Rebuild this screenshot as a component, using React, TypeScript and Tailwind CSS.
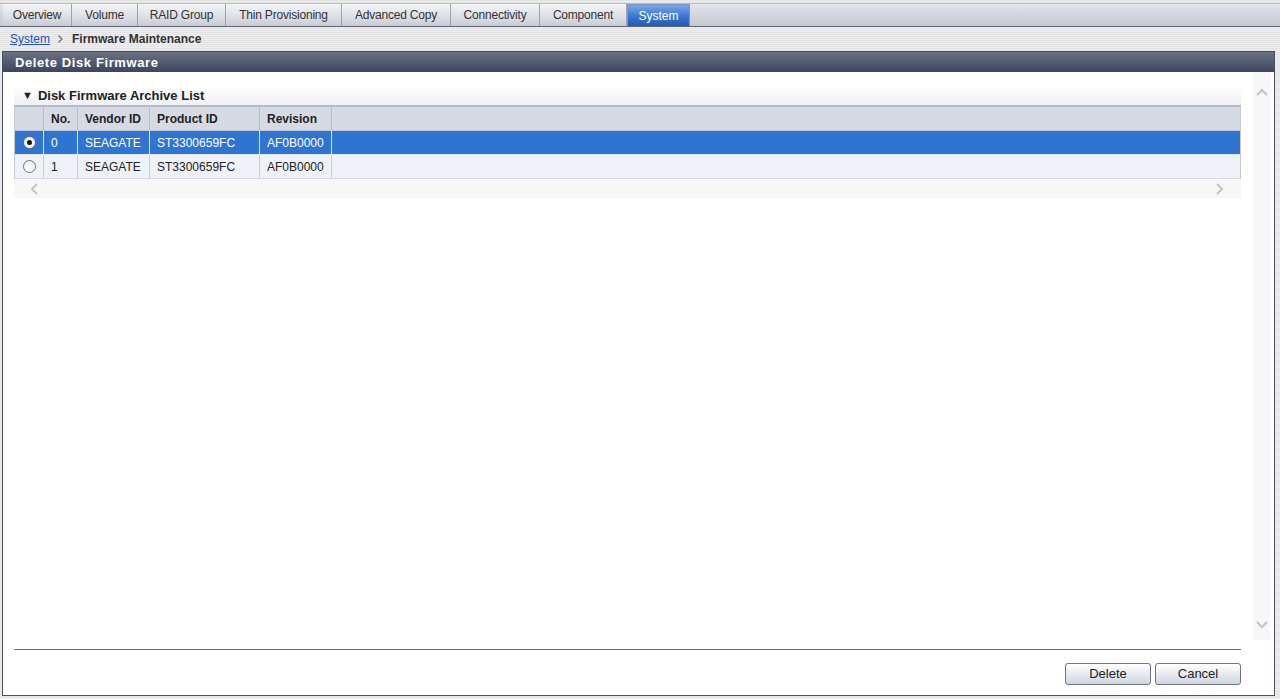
const tabs = [
  { label: "Overview", w: "w-[69px]" },
  { label: "Volume", w: "w-[66px]" },
  { label: "RAID Group", w: "w-[88px]" },
  { label: "Thin Provisioning", w: "w-[116px]" },
  { label: "Advanced Copy", w: "w-[109px]" },
  { label: "Connectivity", w: "w-[89px]" },
  { label: "Component", w: "w-[87px]" },
];

const rows = [
  { no: "0", vendor: "SEAGATE", product: "ST3300659FC", rev: "AF0B0000", selected: true },
  { no: "1", vendor: "SEAGATE", product: "ST3300659FC", rev: "AF0B0000", selected: false },
];

function Chevron({ dir }: { dir: "up" | "down" | "left" | "right" }) {
  const pts = {
    up: "2,9 7,4 12,9",
    down: "2,4 7,9 12,4",
    left: "9,2 4,7 9,12",
    right: "4,2 9,7 4,12",
  }[dir];
  return (
    <svg width="14" height="14" viewBox="0 0 14 14">
      <polyline points={pts} fill="none" stroke="#c4c4c4" strokeWidth="2" />
    </svg>
  );
}

function Radio({ checked }: { checked: boolean }) {
  return (
    <span className="w-[13px] h-[13px] rounded-full border border-[#707070] bg-gradient-to-b from-[#f0f0f0] to-white flex items-center justify-center">
      {checked && <span className="w-[5px] h-[5px] rounded-full bg-[#1a1a1a]" />}
    </span>
  );
}

const stripes =
  "bg-[repeating-linear-gradient(0deg,#e3e3e3_0px,#e3e3e3_1px,#eeeeee_1px,#eeeeee_2px)]";

export default function App() {
  return (
    <div
      className={`w-full h-[699px] flex flex-col ${stripes} text-[12px] text-[#222]`}
      style={{ fontFamily: '"Liberation Sans", Arial, sans-serif' }}
    >
      {/* tab bar */}
      <div className="h-[3px]" />
      <div className="h-[24px] flex items-end pl-[3px] bg-gradient-to-b from-[#e2e5ea] to-[#c4c8cf] border-t border-[#b8bcc4] border-b border-b-[#5d6370]">
        {tabs.map((t) => (
          <div
            key={t.label}
            className={`${t.w} h-[22px] flex items-center justify-center border-r border-[#9ea3ad] bg-gradient-to-b from-[#f4f5f7] via-[#dfe2e7] to-[#c9ccd3] text-[#333] tracking-[-0.2px]`}
          >
            {t.label}
          </div>
        ))}
        <div className="w-[63px] h-[22px] flex items-center justify-center border border-[#7d95c0] border-b-0 bg-gradient-to-b from-[#79a6e4] via-[#3f7bd1] to-[#2059b5] text-white">
          System
        </div>
      </div>

      {/* breadcrumb */}
      <div className="h-[24px] flex items-center pl-[10px] gap-[7px]">
        <span className="text-[#1a52c5] underline">System</span>
        <svg width="7" height="10" viewBox="0 0 7 10">
          <polyline points="1.5,1.5 5,5 1.5,8.5" fill="none" stroke="#666" strokeWidth="1.1" />
        </svg>
        <span className="font-bold text-[#333] ml-[1px]">Firmware Maintenance</span>
      </div>

      {/* main panel */}
      <div className="flex-1 ml-[2px] mr-[5px] mb-[3px] border border-[#4b5060] bg-white flex flex-col min-h-0">
        <div className="h-[20px] flex items-center pt-[1px] pl-[12px] bg-gradient-to-b from-[#6c7282] to-[#3c4560] text-white font-bold text-[13px] tracking-[0.6px]">
          Delete Disk Firmware
        </div>

        <div className="flex-1 flex min-h-0">
          <div className="flex-1 pl-[11px] pt-[14px]">
            <div className="h-[19px] flex items-center pl-[8px] gap-[5px] bg-gradient-to-b from-white to-[#eef0f3] font-bold text-[13px] text-[#222]">
              <span className="text-[11px]">▼</span>
              <span>Disk Firmware Archive List</span>
            </div>
            <div className="border-t-2 border-[#b5bcc8] border-x border-x-[#c5cad3]">
              <div className="h-[24px] flex bg-[#d6dbe3] font-bold text-[#222] border-b border-[#c0c6d0]">
                <div className="w-[29px] border-r border-[#b9c0cb]" />
                <div className="w-[34px] border-r border-[#b9c0cb] flex items-center pl-[7px]">No.</div>
                <div className="w-[72px] border-r border-[#b9c0cb] flex items-center pl-[7px]">Vendor ID</div>
                <div className="w-[110px] border-r border-[#b9c0cb] flex items-center pl-[7px]">Product ID</div>
                <div className="w-[72px] border-r border-[#b9c0cb] flex items-center pl-[7px]">Revision</div>
                <div className="flex-1" />
              </div>
              {rows.map((r) => (
                <div
                  key={r.no}
                  className={`h-[24px] flex ${
                    r.selected ? "bg-[#2f74d0] text-white" : "bg-[#eef2f6] text-[#222]"
                  } border-b ${r.selected ? "border-[#e0e6ee]" : "border-[#d6dbe3]"}`}
                >
                  <div
                    className={`w-[29px] flex items-center justify-center border-r ${
                      r.selected ? "border-[#dfe6f0]" : "border-[#c9cfd8]"
                    }`}
                  >
                    <Radio checked={r.selected} />
                  </div>
                  <div className={`w-[34px] flex items-center pl-[7px] border-r ${r.selected ? "border-[#dfe6f0]" : "border-[#c9cfd8]"}`}>{r.no}</div>
                  <div className={`w-[72px] flex items-center pl-[7px] border-r ${r.selected ? "border-[#dfe6f0]" : "border-[#c9cfd8]"}`}>{r.vendor}</div>
                  <div className={`w-[110px] flex items-center pl-[7px] border-r ${r.selected ? "border-[#dfe6f0]" : "border-[#c9cfd8]"}`}>{r.product}</div>
                  <div className={`w-[72px] flex items-center pl-[7px] border-r ${r.selected ? "border-[#dfe6f0]" : "border-[#c9cfd8]"}`}>{r.rev}</div>
                  <div className="flex-1" />
                </div>
              ))}
            </div>
            <div className="h-[19px] flex items-center justify-between px-[14px] bg-[#f7f7f7]">
              <Chevron dir="left" />
              <Chevron dir="right" />
            </div>
          </div>
          <div className="w-[17px] ml-[12px] mr-[4px] bg-[#f7f7f7] flex flex-col items-center justify-between pt-[14px] pb-[8px]">
            <Chevron dir="up" />
            <Chevron dir="down" />
          </div>
        </div>

        {/* footer */}
        <div className="h-[55px] px-[11px] pr-[33px] pt-[9px]">
          <div className="h-[1px] bg-[#6b6b6b]" />
          <div className="flex justify-end gap-[4px] mt-[13px]">
            <button className="w-[86px] h-[22px] rounded-[3px] border border-[#6e7480] bg-gradient-to-b from-white to-[#cfd6e0] text-[13px] text-[#222]">
              Delete
            </button>
            <button className="w-[86px] h-[22px] rounded-[3px] border border-[#6e7480] bg-gradient-to-b from-white to-[#cfd6e0] text-[13px] text-[#222]">
              Cancel
            </button>
          </div>
        </div>
      </div>
    </div>
  );
}
